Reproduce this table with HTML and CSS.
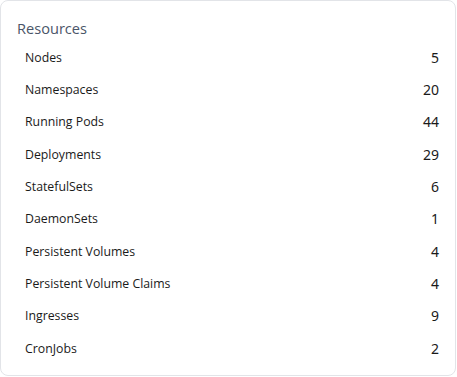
FILE: index.html
```html
<!DOCTYPE html>
<html>
<head>
<meta charset="utf-8">
<link rel="stylesheet" href="styles.css">
</head>
<body>
<div class="card">
  <h2 class="title">Resources</h2>
  <ul class="list">
    <li class="row"><span class="label">Nodes</span><span class="value">5</span></li>
    <li class="row"><span class="label">Namespaces</span><span class="value">20</span></li>
    <li class="row"><span class="label">Running Pods</span><span class="value">44</span></li>
    <li class="row"><span class="label">Deployments</span><span class="value">29</span></li>
    <li class="row"><span class="label">StatefulSets</span><span class="value">6</span></li>
    <li class="row"><span class="label">DaemonSets</span><span class="value">1</span></li>
    <li class="row"><span class="label">Persistent Volumes</span><span class="value">4</span></li>
    <li class="row"><span class="label">Persistent Volume Claims</span><span class="value">4</span></li>
    <li class="row"><span class="label">Ingresses</span><span class="value">9</span></li>
    <li class="row"><span class="label">CronJobs</span><span class="value">2</span></li>
  </ul>
</div>
</body>
</html>
```
FILE: styles.css
```css
html, body {
  margin: 0;
  padding: 0;
  background: #ffffff;
}
body {
  font-family: "Open Sans", "Noto Sans", sans-serif;
}
.card {
  box-sizing: border-box;
  width: 456px;
  height: 376px;
  border: 1px solid #e2e4e8;
  border-radius: 8px;
  padding: 16px 16px 0 16px;
}
.title {
  margin: 0 0 2px 0;
  font-size: 14.6px;
  font-weight: 400;
  line-height: 22px;
  color: #4a5568;
}
.list {
  list-style: none;
  margin: 0;
  padding: 0 0 0 8px;
}
.row {
  display: flex;
  justify-content: space-between;
  align-items: center;
  height: 32.35px;
}
.label {
  font-size: 12.3px;
  color: #1a1a1a;
}
.value {
  font-size: 14px;
  color: #1a1a1a;
  font-family: "Noto Sans", sans-serif;
}
```
